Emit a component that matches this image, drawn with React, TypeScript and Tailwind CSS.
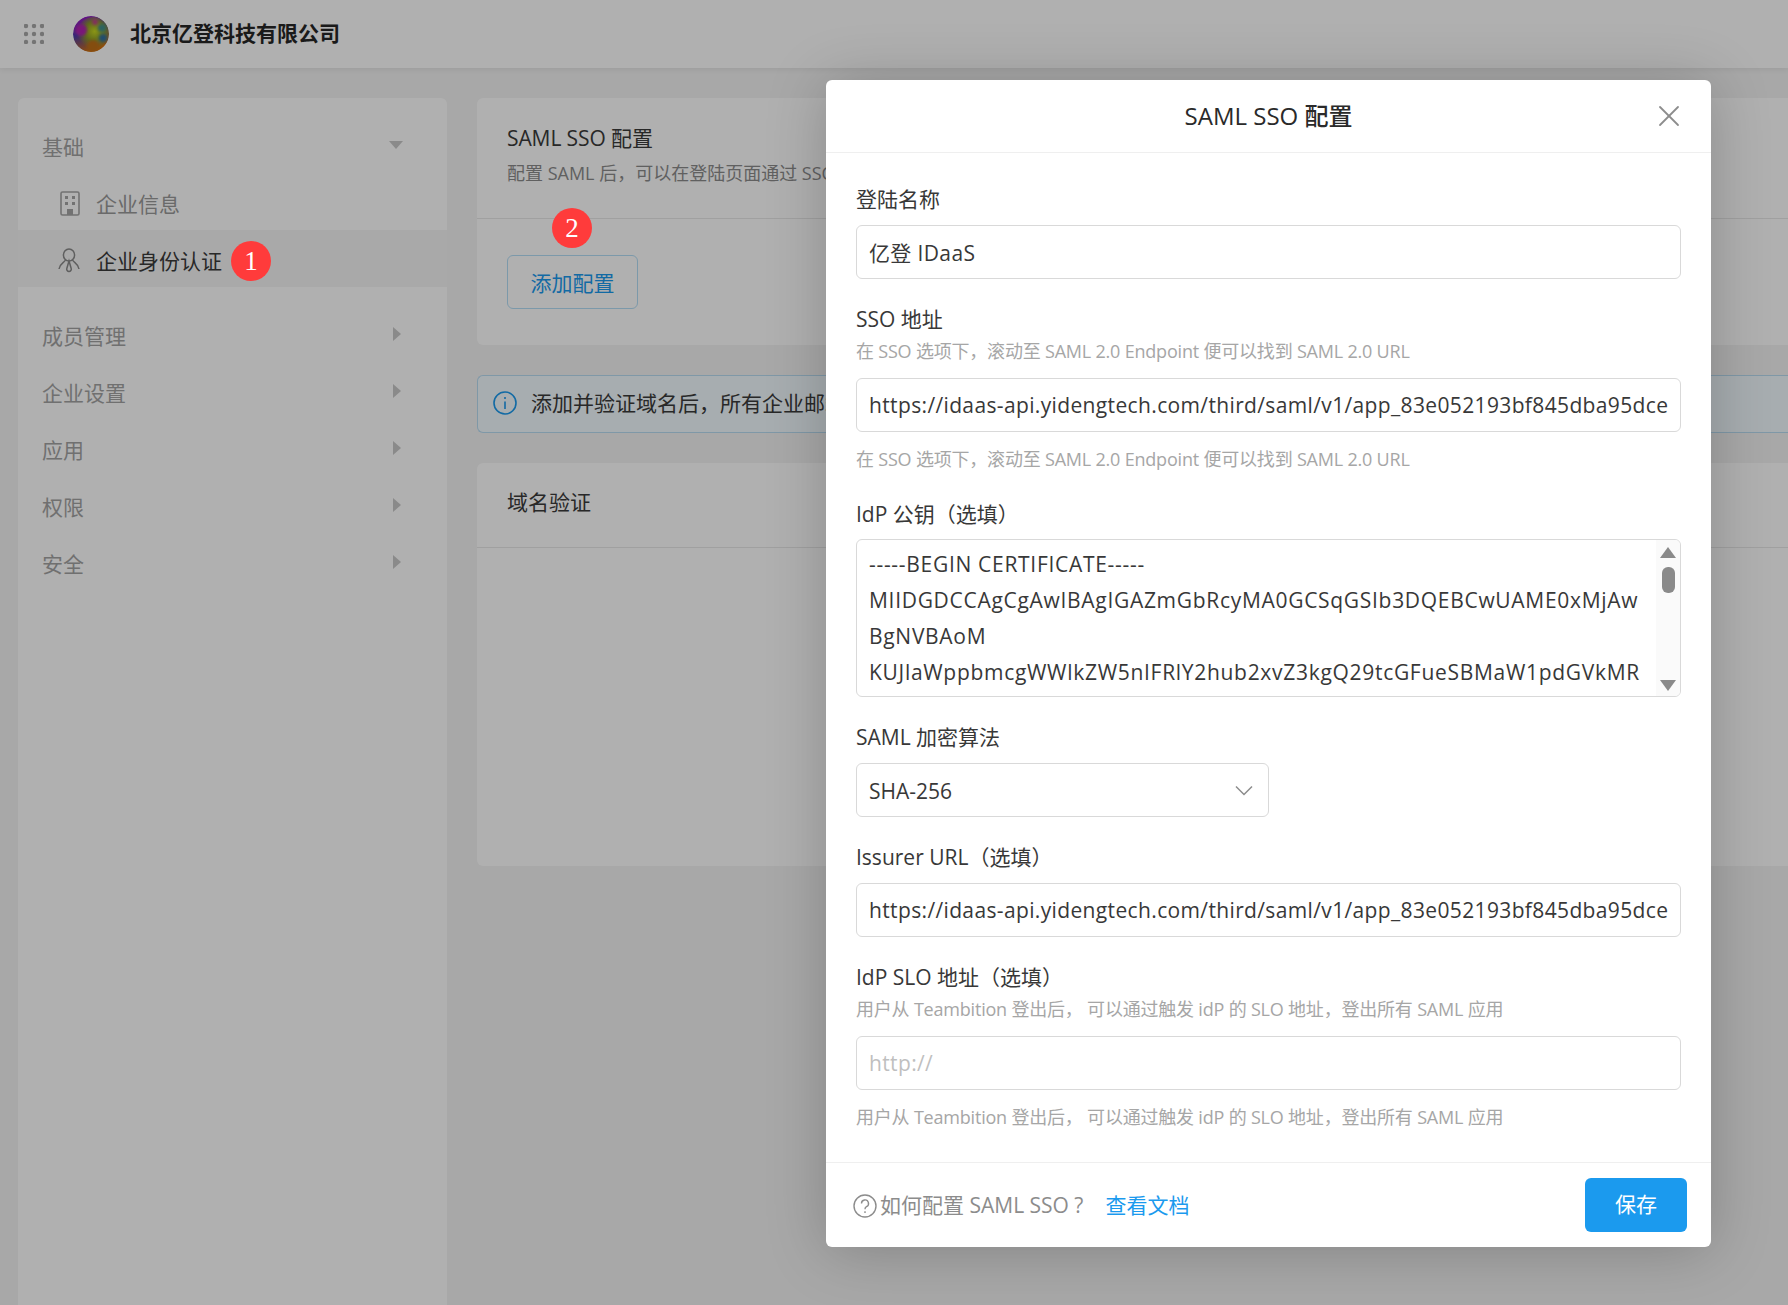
import { X } from "lucide-react"

const font = "font-['Open_Sans','Noto_Sans_CJK_SC',sans-serif]"

const menuItems = ["成员管理", "企业设置", "应用", "权限", "安全"]

function NumberBadge({ n, className }: { n: number; className: string }) {
  return (
    <span
      className={`absolute z-10 flex h-10 w-10 items-center justify-center rounded-full bg-[#ff3b3b] font-['Liberation_Serif',serif] text-[27px] text-white ${className}`}
    >
      {n}
    </span>
  )
}

function CaretRight() {
  return (
    <svg width="8" height="14" viewBox="0 0 8 14" className="fill-[#c8c8c8]">
      <path d="M0 0 L8 7 L0 14 Z" />
    </svg>
  )
}

function BuildingIcon() {
  return (
    <svg width="20" height="25" viewBox="0 0 20 25" className="mt-1 fill-none stroke-[#a6a6a6]">
      <rect x="1" y="1" width="18" height="23" rx="1.5" strokeWidth="1.6" />
      <g className="fill-[#a6a6a6] stroke-none">
        <rect x="5" y="5" width="3" height="3" />
        <rect x="12" y="5" width="3" height="3" />
        <rect x="5" y="11" width="3" height="3" />
        <rect x="12" y="11" width="3" height="3" />
        <rect x="7" y="18" width="6" height="6" />
      </g>
    </svg>
  )
}

function PersonIcon() {
  return (
    <svg width="22" height="25" viewBox="0 0 22 25" className="mt-[2px] fill-none stroke-[#8a8a8a]" strokeWidth="1.5">
      <ellipse cx="11" cy="7" rx="5.6" ry="6" />
      <path d="M7.5 12 C6 15 2 15 1 21" />
      <path d="M14.5 12 C16 15 20 15 21 21" />
      <path d="M11 13 L8.8 20.5 A2.3 2.3 0 1 0 13.2 20.5 Z" />
    </svg>
  )
}

function Sidebar() {
  return (
    <aside className="w-[429px] shrink-0 rounded-t-md bg-white pt-[18px]">
      <div className="flex h-[57px] items-center justify-between pl-6 pr-[44px] text-[21px] text-[#a3a3a3]">
        <span className="pt-[7px]">基础</span>
        <svg width="14" height="8" viewBox="0 0 14 8" className="fill-[#c8c8c8]">
          <path d="M0 0 H14 L7 8 Z" />
        </svg>
      </div>
      <div className="flex h-[57px] items-center gap-4 pl-[42px] text-[21px] text-[#9a9a9a]">
        <BuildingIcon />
        <span className="pt-[7px]">企业信息</span>
      </div>
      <div className="relative flex h-[57px] items-center gap-[15px] bg-[#f5f5f5] pl-[40px] pt-[2px] text-[21px] text-[#3a3a3a]">
        <PersonIcon />
        <span className="pl-px pt-1">企业身份认证</span>
      </div>
      <div className="mt-[21px]">
        {menuItems.map((item) => (
          <div
            key={item}
            className="flex h-[57px] items-center justify-between pl-6 pr-[46px] text-[21px] text-[#a3a3a3]"
          >
            <span>{item}</span>
            <span className="mb-[6px]">
              <CaretRight />
            </span>
          </div>
        ))}
      </div>
    </aside>
  )
}

function MainPanel() {
  return (
    <main className="min-w-0 flex-1">
      <section className="h-[247px] rounded-l-md bg-white">
        <div className="h-[121px] border-b border-[#e8e8e8] px-[30px] pt-[24px]">
          <div className="h-8 text-[21px] leading-8 tracking-[-0.1px] text-[#3a3a3a]">SAML SSO 配置</div>
          <div className="mt-[6px] whitespace-nowrap text-[18px] leading-[27px] text-[#8c8c8c]">
            配置 SAML 后，可以在登陆页面通过 SSO 登录企业账号
          </div>
        </div>
        <div className="px-[30px] pt-[36px]">
          <button className="h-[54px] w-[131px] rounded-md border border-[#b4def7] pt-[3px] text-[21px] text-[#1b9aee]">
            添加配置
          </button>
        </div>
      </section>

      <div className="mt-[30px] flex h-[58px] items-center gap-[14px] rounded-l-md border border-r-0 border-[#b8dcf2] bg-[#f2fbff] pl-[15px] text-[21px] text-[#3a3a3a]">
        <svg width="24" height="24" viewBox="0 0 24 24" className="mb-[2px] fill-none stroke-[#1b9aee]" strokeWidth="1.6">
          <circle cx="12" cy="12" r="11" />
          <path d="M12 10.5 V18" />
          <path d="M12 6 V8" />
        </svg>
        <span className="whitespace-nowrap">添加并验证域名后，所有企业邮箱成员都可以加入企业</span>
      </div>

      <section className="mt-[30px] h-[403px] rounded-l-md bg-white">
        <div className="flex h-[85px] items-center border-b border-[#e8e8e8] px-[30px] pb-[4px] text-[21px] text-[#3a3a3a]">
          域名验证
        </div>
      </section>
    </main>
  )
}

function Label({ children }: { children: React.ReactNode }) {
  return <div className="h-8 text-[21px] leading-8 text-[#383838]">{children}</div>
}

function Help({ children, top }: { children: React.ReactNode; top?: boolean }) {
  return (
    <div
      className={`h-[27px] whitespace-nowrap text-[18px] leading-[27px] tracking-[-0.2px] text-[#a6a6a6] ${
        top ? "mb-[13px] mt-[3px]" : "mt-[14px]"
      }`}
    >
      {children}
    </div>
  )
}

function TextInput({ value, placeholder }: { value?: string; placeholder?: string }) {
  return (
    <input
      readOnly
      defaultValue={value}
      placeholder={placeholder}
      className="block h-[54px] w-full rounded-md border border-[#d9d9d9] px-3 text-[21px] tracking-[0.36px] text-[#383838] outline-none placeholder:text-[#bfbfbf]"
    />
  )
}

const samlUrl = "https://idaas-api.yidengtech.com/third/saml/v1/app_83e052193bf845dba95dce"
const ssoHelp = "在 SSO 选项下，滚动至 SAML 2.0 Endpoint 便可以找到 SAML 2.0 URL"
const sloHelp = "用户从 Teambition 登出后， 可以通过触发 idP 的 SLO 地址，登出所有 SAML 应用"

function CertificateBox() {
  return (
    <div className="relative mt-[9px] h-[158px] overflow-hidden rounded-md border border-[#d9d9d9] px-3 pt-[6px] text-[21px] leading-9 tracking-[0.7px] text-[#383838]">
      <div className="whitespace-nowrap">-----BEGIN CERTIFICATE-----</div>
      <div className="whitespace-nowrap">MIIDGDCCAgCgAwIBAgIGAZmGbRcyMA0GCSqGSIb3DQEBCwUAME0xMjAw</div>
      <div className="whitespace-nowrap">BgNVBAoM</div>
      <div className="whitespace-nowrap">KUJlaWppbmcgWWlkZW5nIFRlY2hub2xvZ3kgQ29tcGFueSBMaW1pdGVkMR</div>
      {/* scrollbar */}
      <div className="absolute bottom-0 right-0 top-0 flex w-6 flex-col items-center bg-[#fafafa] pt-[7px]">
        <svg width="16" height="11" viewBox="0 0 16 11" className="fill-[#8a8a8a]">
          <path d="M8 0 L16 11 H0 Z" />
        </svg>
        <div className="mt-[9px] h-[26px] w-[13px] rounded-md bg-[#8a8a8a]" />
        <svg width="16" height="11" viewBox="0 0 16 11" className="mt-[87px] fill-[#8a8a8a]">
          <path d="M0 0 H16 L8 11 Z" />
        </svg>
      </div>
    </div>
  )
}

function ConfigModal() {
  return (
    <div className="absolute left-[826px] top-20 z-20 flex h-[1167px] w-[885px] flex-col rounded-md bg-white shadow-[0_4px_60px_rgba(0,0,0,0.22)]">
      <header className="relative flex h-[73px] shrink-0 items-center justify-center border-b border-[#efefef] text-[24px] text-[#2a2a2a]">
        <span className="font-medium">SAML SSO 配置</span>
        <X className="absolute right-6 top-[18px] text-[#8c8c8c]" size={36} strokeWidth={1.2} />
      </header>

      <div className="flex-1 px-[30px] pt-[30px]">
        <Label>登陆名称</Label>
        <div className="mt-[10px]">
          <TextInput value="亿登 IDaaS" />
        </div>

        <div className="mt-6">
          <Label>SSO 地址</Label>
          <Help top>{ssoHelp}</Help>
          <TextInput value={samlUrl} />
          <Help>{ssoHelp}</Help>
        </div>

        <div className="mt-[25px]">
          <Label>IdP 公钥（选填）</Label>
          <CertificateBox />
        </div>

        <div className="mt-6">
          <Label>SAML 加密算法</Label>
          <div className="mt-[10px] flex h-[54px] w-[413px] items-center justify-between rounded-md border border-[#d9d9d9] pl-3 pr-[14px] text-[21px] text-[#383838]">
            <span className="pt-[3px]">SHA-256</span>
            <svg width="20" height="11" viewBox="0 0 20 11" className="fill-none stroke-[#8c8c8c]" strokeWidth="1.5">
              <path d="M2 1.5 L10 9.5 L18 1.5" />
            </svg>
          </div>
        </div>

        <div className="mt-6">
          <Label>Issurer URL（选填）</Label>
          <div className="mt-[10px]">
            <TextInput value={samlUrl} />
          </div>
        </div>

        <div className="mt-6">
          <Label>IdP SLO 地址（选填）</Label>
          <Help top>{sloHelp}</Help>
          <TextInput placeholder="http://" />
          <Help>{sloHelp}</Help>
        </div>
      </div>

      <footer className="flex h-[85px] shrink-0 items-center justify-between border-t border-[#efefef] pl-[27px] pr-6 pt-[2px] text-[21px]">
        <div className="flex items-center text-[#8c8c8c]">
          <svg width="24" height="24" viewBox="0 0 24 24" className="mr-[3px] fill-none stroke-[#8c8c8c]" strokeWidth="1.4">
            <circle cx="12" cy="12" r="11" />
            <path d="M8.5 9.5 A3.5 3.5 0 1 1 13.5 12.6 C12.4 13.2 12 14 12 15.2" />
            <path d="M12 17.2 V19" />
          </svg>
          <span>如何配置 SAML SSO ?</span>
          <a className="ml-[22px] text-[#1b9aee]">查看文档</a>
        </div>
        <button className="mb-[2px] h-[54px] w-[102px] rounded-md bg-[#1b9aee] text-white">保存</button>
      </footer>
    </div>
  )
}

export default function App() {
  return (
    <div className={`relative h-[1305px] overflow-hidden bg-[#f3f3f3] ${font}`}>
      <header className="flex h-[68px] items-center bg-white shadow-[0_1px_6px_rgba(0,0,0,0.08)]">
        <svg width="20" height="20" viewBox="0 0 20 20" className="ml-6 fill-[#a8a8a8]">
          {[2, 10, 18].map((cy) =>
            [2, 10, 18].map((cx) => <circle key={`${cx}-${cy}`} cx={cx} cy={cy} r="2.2" />)
          )}
        </svg>
        <svg width="36" height="36" viewBox="0 0 36 36" className="ml-[29px]">
          <defs>
            <radialGradient id="avatarA" cx="0.55" cy="0.45" r="0.55">
              <stop offset="0" stopColor="#c8d820" />
              <stop offset="0.55" stopColor="#8a9a28" />
              <stop offset="1" stopColor="#8a9a28" stopOpacity="0" />
            </radialGradient>
            <linearGradient id="avatarB" x1="0" y1="0" x2="0.4" y2="1">
              <stop offset="0" stopColor="#b010c8" />
              <stop offset="0.5" stopColor="#4a3aa8" />
              <stop offset="1" stopColor="#d07010" />
            </linearGradient>
            <filter id="avatarBlur">
              <feGaussianBlur stdDeviation="1.6" />
            </filter>
            <clipPath id="avatarClip">
              <circle cx="18" cy="18" r="18" />
            </clipPath>
          </defs>
          <g clipPath="url(#avatarClip)">
            <circle cx="18" cy="18" r="18" fill="url(#avatarB)" />
            <circle cx="20" cy="17" r="16" fill="url(#avatarA)" />
            <g filter="url(#avatarBlur)">
              <circle cx="8" cy="14" r="6" fill="#b020b0" />
              <circle cx="29" cy="12" r="4" fill="#3f8f8f" />
              <circle cx="30" cy="22" r="4" fill="#2f6fa0" />
              <circle cx="20" cy="30" r="6" fill="#c07018" />
              <circle cx="22" cy="6" r="3" fill="#c04090" />
            </g>
          </g>
        </svg>
        <div className="ml-[21px] text-[21px] font-bold text-[#262626]">北京亿登科技有限公司</div>
      </header>

      <div className="flex h-[1237px] gap-[30px] pl-[18px] pt-[30px]">
        <Sidebar />
        <MainPanel />
      </div>

      {/* modal mask sits over the whole page */}
      <div className="absolute inset-0 bg-black/[0.31]" />

      <NumberBadge n={1} className="left-[231px] top-[241px]" />
      <NumberBadge n={2} className="left-[552px] top-[208px]" />

      <ConfigModal />
    </div>
  )
}
